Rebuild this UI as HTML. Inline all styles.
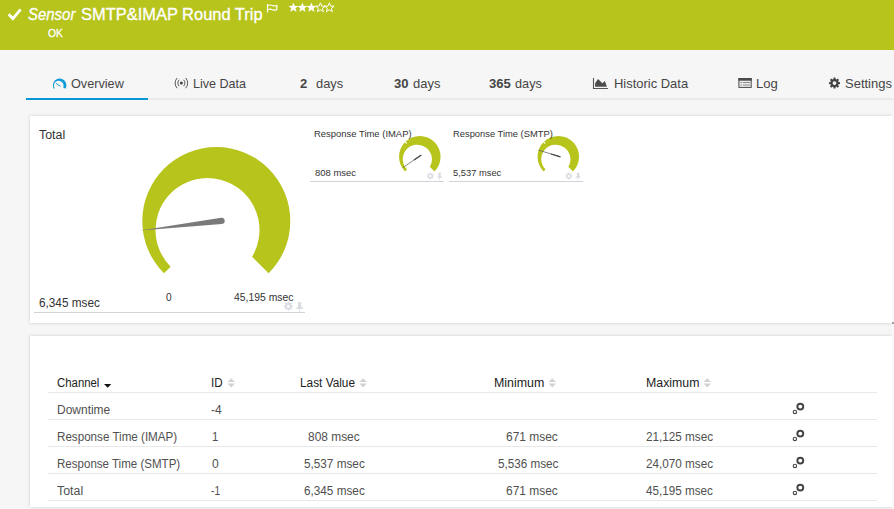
<!DOCTYPE html>
<html><head><meta charset="utf-8"><title>Sensor SMTP&amp;IMAP Round Trip</title>
<style>
*{box-sizing:border-box;margin:0;padding:0}
html,body{width:894px;height:509px;overflow:hidden;background:#f6f6f6;font-family:"Liberation Sans",sans-serif}
.t{position:absolute;white-space:nowrap;line-height:1;transform-origin:0 0;display:block}
.t b{font-weight:bold}
#hdr{position:absolute;left:0;top:0;width:894px;height:50px;background:#b7c41b}
#tabline{position:absolute;left:26px;top:98px;width:868px;height:2px;background:#ebebeb}
#tabsel{position:absolute;left:26px;top:98px;width:122px;height:2px;background:#0797d3}
.card{position:absolute;left:30px;width:862px;background:#fff;box-shadow:0 0 4px rgba(0,0,0,.13),0 0 1px rgba(0,0,0,.1)}
.hl{position:absolute;height:1px;background:#d1d3d6}
.row{position:absolute;left:48px;width:829px;height:1px;background:#e8e8e8}
#art{position:absolute;left:0;top:0;width:894px;height:509px}
</style></head><body>
<div id="hdr"></div>
<div id="tabline"></div><div id="tabsel"></div>
<div class="card" style="top:116px;height:207px"></div>
<div class="card" style="top:336px;height:171px"></div>
<div style="position:absolute;left:892px;top:113px;width:2px;height:396px;background:#f8f8f8"></div><div style="position:absolute;left:892px;top:322px;width:2px;height:2px;background:#a0a0a0"></div>
<div class="hl" style="left:34px;top:312px;width:271px"></div>
<div class="hl" style="left:310px;top:181px;width:134px"></div>
<div class="hl" style="left:449px;top:181px;width:134px"></div>
<div class="row" style="top:392px"></div>
<div class="row" style="top:419px"></div>
<div class="row" style="top:446px"></div>
<div class="row" style="top:473px"></div>
<div class="row" style="top:500px"></div>
<svg id="art" width="894" height="509" viewBox="0 0 894 509">
<defs>
 <path id="g" d="M-52.33 52.33A74 74 0 1 1 52.33 52.33L35.78 35.78A52 52 0 1 0 -45.67 45.67Z"/>
 <path id="star" d="M0 -4.8L1.35 -1.5L4.75 -1.5L2.05 0.75L2.95 4.1L0 2.15L-2.95 4.1L-2.05 0.75L-4.75 -1.5L-1.35 -1.5Z"/>
 <path id="gear" d="M-1.07 -4.01L-0.97 -5.51L0.97 -5.51L1.07 -4.01L2.08 -3.59L3.21 -4.59L4.59 -3.21L3.59 -2.07L4.01 -1.07L5.51 -0.97L5.51 0.97L4.01 1.07L3.59 2.07L4.59 3.21L3.21 4.59L2.08 3.59L1.07 4.01L0.97 5.51L-0.97 5.51L-1.07 4.01L-2.07 3.59L-3.21 4.59L-4.59 3.21L-3.59 2.07L-4.01 1.07L-5.51 0.97L-5.51 -0.97L-4.01 -1.07L-3.59 -2.08L-4.59 -3.21L-3.21 -4.59L-2.08 -3.59ZM0 -1.9a1.9 1.9 0 1 0 0 3.8a1.9 1.9 0 1 0 0 -3.8z" fill-rule="evenodd"/>
 <path id="pin" d="M-2.2 -4.6h4.4v1h-.8v3l1.9 1.9v.8h-2.9v3l-.4 1.2-.4-1.2v-3h-2.9v-.8l1.9-1.9v-3h-.8z"/>
 <g id="sort"><path d="M0 3.7L3.7 0L7.4 3.7Z"/><path d="M0 5.4L7.4 5.4L3.7 9.4Z"/></g>
 <g id="cog2"><circle cx="0" cy="0" r="2.95" fill="none" stroke="#444" stroke-width="1.95"/><circle cx="-5.4" cy="5.3" r="1.7" fill="none" stroke="#444" stroke-width="1.1"/></g>
</defs>
<!-- header icons -->
<path d="M8.6 14.2L12.9 18.6L20.6 9.4" fill="none" stroke="#fff" stroke-width="2.8"/>
<path d="M267.5 4v8.6M268 5.5q2.2-1 4.4 0t4.4 0v4.2q-2.2 1-4.4 0t-4.4 0" fill="none" stroke="#fff" stroke-width="1.15"/>
<g fill="#fff" stroke="#fff" stroke-width=".2"><use href="#star" x="293.4" y="7.6"/><use href="#star" x="302.4" y="7.6"/><use href="#star" x="311.4" y="7.6"/></g>
<g fill="none" stroke="#fff" stroke-width="1"><use href="#star" x="320.4" y="7.6"/><use href="#star" x="329.4" y="7.6"/></g>
<!-- tab icons -->
<g transform="translate(59.65 85.35)"><path d="M-5.85 3.375A6.75 6.75 0 1 1 5.85 3.375L3.53 2.04A4.8 4.8 0 1 0 -4.9 2.83Z" fill="#0f9bd8"/><path d="M-3.85 -2.15L1.05 1.05" stroke="#0f9bd8" stroke-width=".9"/></g>
<g fill="none" stroke="#555" stroke-width="1"><circle cx="181.4" cy="83" r="1.5" fill="#444" stroke="none"/><path d="M179.2 79.8a4.6 4.6 0 0 0 0 6.4M183.6 79.8a4.6 4.6 0 0 1 0 6.4M177.2 78a7.3 7.3 0 0 0 0 10.2M185.6 78a7.3 7.3 0 0 1 0 10.2"/></g>
<path d="M593.5 78v10.5h14.4" fill="none" stroke="#555" stroke-width="1.1"/><path d="M595.1 86.8v-3.6l2.9-4.2 4.4 4.3 2.5-2.3 2 5.8z" fill="#4d4d4d"/>
<g><rect x="738.9" y="78.6" width="12.3" height="8.8" fill="#ececec" stroke="#4a4a4a" stroke-width="1"/><rect x="738.4" y="78.1" width="13.3" height="2.6" fill="#4a4a4a"/><path d="M740.5 82.5h1.6M743 82.5h7M740.5 85h1.6M743 85h7" stroke="#8c8c8c" stroke-width="1.1"/></g>
<use href="#gear" x="834.5" y="83.1" fill="#444"/>
<!-- gauges -->
<use href="#g" x="216.3" y="221" fill="#b7c41b"/>
<path d="M140.2 230.6L221.23 217.77A3.1 3.1 0 0 1 221.97 223.93Z" fill="#7a7a7a"/>
<g transform="translate(419.8 156.7) scale(.2805)"><use href="#g" fill="#b7c41b"/></g>
<path d="M404.9 141.7L406.7 143.5" stroke="#fff" stroke-width="1.1"/><path d="M403 167.5L421 155.2" stroke="#555" stroke-width=".7"/><path d="M414 160L421.4 155" stroke="#444" stroke-width="1.3"/>
<g transform="translate(558.3 156.7) scale(.2805)"><use href="#g" fill="#b7c41b"/></g>
<path d="M543.4 141.7L545.2 143.5" stroke="#fff" stroke-width="1.1"/><path d="M538.4 150.1L560.4 156.8" stroke="#555" stroke-width=".7"/><path d="M551 154L560.4 156.8" stroke="#444" stroke-width="1.3"/>
<!-- card tool icons -->
<g fill="#d9dce1"><g transform="translate(288.4 306.2) scale(.8)"><use href="#gear"/></g><use href="#pin" x="299.6" y="306.8"/>
<g transform="translate(430.3 176) scale(.62)"><use href="#gear"/></g><g transform="translate(439.6 176.2) scale(.75)"><use href="#pin"/></g>
<g transform="translate(568.8 176) scale(.62)"><use href="#gear"/></g><g transform="translate(578.1 176.2) scale(.75)"><use href="#pin"/></g></g>
<!-- table icons -->
<path d="M104 384h7.3l-3.65 3.8z" fill="#111"/>
<g fill="#d2d2d2"><use href="#sort" x="227.5" y="378.2"/><use href="#sort" x="359.4" y="378.2"/><use href="#sort" x="548.6" y="378.2"/><use href="#sort" x="703.6" y="378.2"/></g>
<use href="#cog2" x="800.3" y="406.6"/><use href="#cog2" x="800.3" y="433.6"/><use href="#cog2" x="800.3" y="460.6"/><use href="#cog2" x="800.3" y="487.6"/>
</svg>
<header>
<span class="t" id="t0" style="left:27.67px;top:7.19px;font-size:15.6px;color:#fff;transform:scaleX(0.9584);-webkit-text-stroke:.3px #fff;"><i>Sensor</i></span>
<span class="t" id="t1" style="left:81.00px;top:7.19px;font-size:15.6px;color:#fff;transform:scaleX(1.0545);-webkit-text-stroke:.3px #fff;">SMTP&amp;IMAP Round Trip</span>
<span class="t" id="t2" style="left:48.16px;top:27.51px;font-size:10.5px;color:#fff;transform:scaleX(0.9786);-webkit-text-stroke:.3px #fff;">OK</span>
</header>
<nav>
<span class="t" id="t3" style="left:70.68px;top:76.57px;font-size:13.5px;color:#454545;transform:scaleX(0.9381);">Overview</span>
<span class="t" id="t4" style="left:192.68px;top:76.57px;font-size:13.5px;color:#454545;transform:scaleX(0.9309);">Live Data</span>
<span class="t" id="t5" style="left:299.86px;top:76.57px;font-size:13.5px;color:#454545;transform:scaleX(0.9700);"><b>2</b></span>
<span class="t" id="t6" style="left:315.68px;top:76.57px;font-size:13.5px;color:#454545;transform:scaleX(0.9527);">days</span>
<span class="t" id="t7" style="left:393.56px;top:76.57px;font-size:13.5px;color:#454545;transform:scaleX(0.9700);"><b>30</b></span>
<span class="t" id="t8" style="left:412.98px;top:76.57px;font-size:13.5px;color:#454545;transform:scaleX(0.9600);">days</span>
<span class="t" id="t9" style="left:489.21px;top:76.57px;font-size:13.5px;color:#454545;transform:scaleX(0.9700);"><b>365</b></span>
<span class="t" id="t10" style="left:515.38px;top:76.57px;font-size:13.5px;color:#454545;transform:scaleX(0.9418);">days</span>
<span class="t" id="t11" style="left:613.54px;top:76.57px;font-size:13.5px;color:#454545;transform:scaleX(0.9587);">Historic Data</span>
<span class="t" id="t12" style="left:756.03px;top:76.57px;font-size:13.5px;color:#454545;transform:scaleX(0.9700);">Log</span>
<span class="t" id="t13" style="left:845.13px;top:76.57px;font-size:13.5px;color:#454545;transform:scaleX(0.9621);">Settings</span>
</nav>
<section>
<span class="t" id="t14" style="left:38.90px;top:129.32px;font-size:12.5px;color:#333;transform:scaleX(0.9941);">Total</span>
<span class="t" id="t15" style="left:38.68px;top:297.32px;font-size:12.5px;color:#333;transform:scaleX(0.9412);">6,345 msec</span>
<span class="t" id="t16" style="left:165.91px;top:292.01px;font-size:10.5px;color:#333;transform:scaleX(0.9700);">0</span>
<span class="t" id="t17" style="left:233.60px;top:292.01px;font-size:10.5px;color:#333;transform:scaleX(0.9891);">45,195 msec</span>
<span class="t" id="t18" style="left:314.39px;top:129.34px;font-size:9.4px;color:#333;transform:scaleX(1.0073);">Response Time (IMAP)</span>
<span class="t" id="t19" style="left:314.90px;top:167.74px;font-size:9.4px;color:#333;transform:scaleX(1.0075);">808 msec</span>
<span class="t" id="t20" style="left:452.90px;top:129.34px;font-size:9.4px;color:#333;transform:scaleX(0.9975);">Response Time (SMTP)</span>
<span class="t" id="t21" style="left:453.40px;top:167.74px;font-size:9.4px;color:#333;transform:scaleX(0.9958);">5,537 msec</span>
</section>
<section>
<span class="t" id="t22" style="left:56.85px;top:376.62px;font-size:12.5px;color:#222;transform:scaleX(0.9105);">Channel</span>
<span class="t" id="t23" style="left:211.18px;top:376.62px;font-size:12.5px;color:#222;transform:scaleX(0.9302);">ID</span>
<span class="t" id="t24" style="left:299.75px;top:376.62px;font-size:12.5px;color:#222;transform:scaleX(0.9463);">Last Value</span>
<span class="t" id="t25" style="left:493.66px;top:376.62px;font-size:12.5px;color:#222;transform:scaleX(0.9918);">Minimum</span>
<span class="t" id="t26" style="left:645.51px;top:376.62px;font-size:12.5px;color:#222;transform:scaleX(0.9867);">Maximum</span>
<span class="t" id="t27" style="left:56.59px;top:403.52px;font-size:12.5px;color:#505050;transform:scaleX(0.9585);">Downtime</span>
<span class="t" id="t28" style="left:211.37px;top:403.52px;font-size:12.5px;color:#505050;transform:scaleX(0.9659);">-4</span>
<span class="t" id="t29" style="left:56.61px;top:430.52px;font-size:12.5px;color:#505050;transform:scaleX(0.9302);">Response Time (IMAP)</span>
<span class="t" id="t30" style="left:211.59px;top:430.52px;font-size:12.5px;color:#505050;transform:scaleX(0.9091);">1</span>
<span class="t" id="t31" style="left:308.48px;top:430.52px;font-size:12.5px;color:#505050;transform:scaleX(0.9540);">808 msec</span>
<span class="t" id="t32" style="left:506.33px;top:430.52px;font-size:12.5px;color:#505050;transform:scaleX(0.9559);">671 msec</span>
<span class="t" id="t33" style="left:646.03px;top:430.52px;font-size:12.5px;color:#505050;transform:scaleX(0.9371);">21,125 msec</span>
<span class="t" id="t34" style="left:56.61px;top:457.52px;font-size:12.5px;color:#505050;transform:scaleX(0.9237);">Response Time (SMTP)</span>
<span class="t" id="t35" style="left:211.86px;top:457.52px;font-size:12.5px;color:#505050;transform:scaleX(0.9700);">0</span>
<span class="t" id="t36" style="left:303.99px;top:457.52px;font-size:12.5px;color:#505050;transform:scaleX(0.9402);">5,537 msec</span>
<span class="t" id="t37" style="left:497.69px;top:457.52px;font-size:12.5px;color:#505050;transform:scaleX(0.9349);">5,536 msec</span>
<span class="t" id="t38" style="left:646.03px;top:457.52px;font-size:12.5px;color:#505050;transform:scaleX(0.9371);">24,070 msec</span>
<span class="t" id="t39" style="left:56.75px;top:484.52px;font-size:12.5px;color:#505050;transform:scaleX(0.9901);">Total</span>
<span class="t" id="t40" style="left:211.43px;top:484.52px;font-size:12.5px;color:#505050;transform:scaleX(0.8200);">-1</span>
<span class="t" id="t41" style="left:303.99px;top:484.52px;font-size:12.5px;color:#505050;transform:scaleX(0.9402);">6,345 msec</span>
<span class="t" id="t42" style="left:506.33px;top:484.52px;font-size:12.5px;color:#505050;transform:scaleX(0.9559);">671 msec</span>
<span class="t" id="t43" style="left:646.27px;top:484.52px;font-size:12.5px;color:#505050;transform:scaleX(0.9338);">45,195 msec</span>
</section>
</body></html>
